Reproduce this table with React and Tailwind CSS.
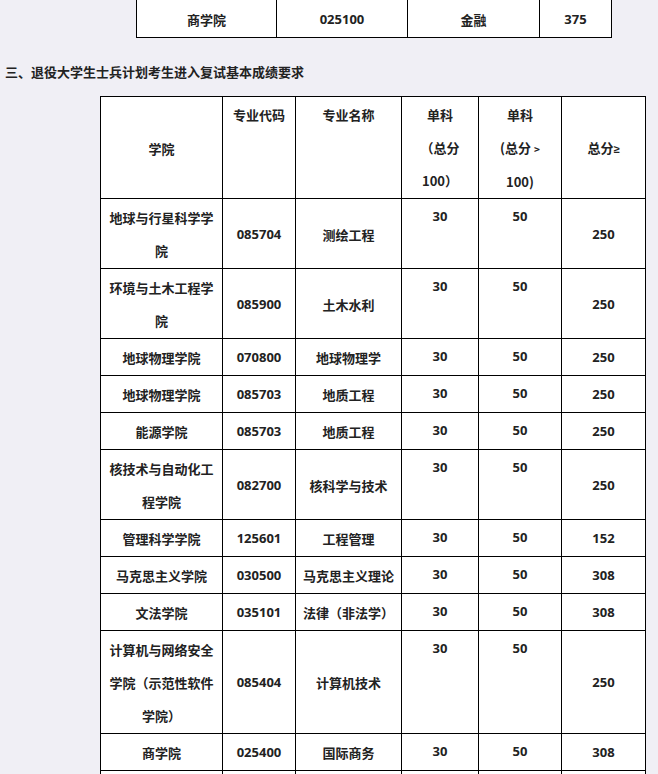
import React from 'react';

// rows of the retired-soldier table; lines = how many text lines the row holds
const rows = [
    { college: '地球与行星科学学院', code: '085704', major: '测绘工程', a: '30', b: '50', total: '250', lines: 2 },
    { college: '环境与土木工程学院', code: '085900', major: '土木水利', a: '30', b: '50', total: '250', lines: 2 },
    { college: '地球物理学院', code: '070800', major: '地球物理学', a: '30', b: '50', total: '250', lines: 1 },
    { college: '地球物理学院', code: '085703', major: '地质工程', a: '30', b: '50', total: '250', lines: 1 },
    { college: '能源学院', code: '085703', major: '地质工程', a: '30', b: '50', total: '250', lines: 1 },
    { college: '核技术与自动化工程学院', code: '082700', major: '核科学与技术', a: '30', b: '50', total: '250', lines: 2 },
    { college: '管理科学学院', code: '125601', major: '工程管理', a: '30', b: '50', total: '152', lines: 1 },
    { college: '马克思主义学院', code: '030500', major: '马克思主义理论', a: '30', b: '50', total: '308', lines: 1 },
    { college: '文法学院', code: '035101', major: '法律（非法学）', a: '30', b: '50', total: '308', lines: 1 },
    { college: '计算机与网络安全学院（示范性软件学院）', code: '085404', major: '计算机技术', a: '30', b: '50', total: '250', lines: 3 },
    { college: '商学院', code: '025400', major: '国际商务', a: '30', b: '50', total: '308', lines: 1 },
];

const rowHeight = { 1: 'h-[37px]', 2: 'h-[70px]', 3: 'h-[103px]' };

const Cell = ({ children, top = false, num = false }) => (
    <td
        className={`border border-black bg-white px-[6px] pt-[1px] pb-0 text-center leading-[33px] ${top ? 'align-top' : 'align-middle'} ${num ? "font-['Open_Sans',sans-serif]" : ''}`}
    >
        {children}
    </td>
);

export default function App() {
    return (
        <div className="min-h-screen bg-[#f0eff5] text-[13px] font-bold text-[#222] font-['Noto_Sans_CJK_SC',sans-serif]">
            {/* tail of the previous table */}
            <div className="pl-[136px] -mt-[1px]">
                <table className="table-fixed border-collapse w-[475px]">
                    <colgroup>
                        <col className="w-[140px]" />
                        <col className="w-[131px]" />
                        <col className="w-[132px]" />
                        <col className="w-[72px]" />
                    </colgroup>
                    <tbody>
                        <tr className="h-[38px]">
                            <Cell>商学院</Cell>
                            <Cell num>025100</Cell>
                            <Cell>金融</Cell>
                            <Cell num>375</Cell>
                        </tr>
                    </tbody>
                </table>
            </div>

            <h3 className="pl-[5px] pt-[24px] pb-[14px] text-[13px] leading-[20px] font-bold">
                三、退役大学生士兵计划考生进入复试基本成绩要求
            </h3>

            <div className="pl-[100px]">
                <table className="table-fixed border-collapse w-[545px]">
                    <colgroup>
                        <col className="w-[122px]" />
                        <col className="w-[73px]" />
                        <col className="w-[106px]" />
                        <col className="w-[77px]" />
                        <col className="w-[83px]" />
                        <col className="w-[84px]" />
                    </colgroup>
                    <tbody>
                        <tr className="h-[101px]">
                            <Cell>学院</Cell>
                            <Cell top>专业代码</Cell>
                            <Cell top>专业名称</Cell>
                            <Cell top>单科<br />（总分<br />100）</Cell>
                            <Cell top>单科<br />(总分 <span className="text-[10px]">&gt;</span><br />100)</Cell>
                            <Cell>总分<span className="font-['Liberation_Sans',sans-serif] text-[11px]">≥</span></Cell>
                        </tr>
                        {rows.map((r, i) => (
                            <tr key={i} className={rowHeight[r.lines]}>
                                <Cell>{r.college}</Cell>
                                <Cell num>{r.code}</Cell>
                                <Cell>{r.major}</Cell>
                                <Cell top num>{r.a}</Cell>
                                <Cell top num>{r.b}</Cell>
                                <Cell num>{r.total}</Cell>
                            </tr>
                        ))}
                        {/* next row continues below the fold */}
                        <tr className="h-[37px]">
                            <Cell />
                            <Cell />
                            <Cell />
                            <Cell />
                            <Cell />
                            <Cell />
                        </tr>
                    </tbody>
                </table>
            </div>
        </div>
    );
}
